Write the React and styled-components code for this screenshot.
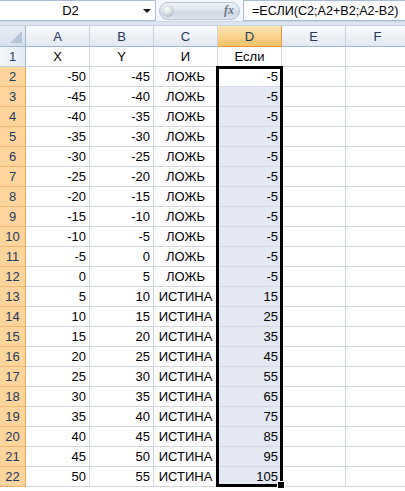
import React from "react";
import styled, { createGlobalStyle } from "styled-components";

const Global = createGlobalStyle`
  html, body { margin: 0; padding: 0; background: #ffffff; }
  body { font-family: "Liberation Sans", Arial, sans-serif; overflow: hidden; }
`;

const Page = styled.div`
  width: 405px;
  height: 491px;
  overflow: hidden;
  background: #ffffff;
`;

const FormulaBar = styled.div`
  display: flex;
  align-items: stretch;
  height: 22px;
  background: #f3f6fa;
  border-bottom: 1px solid #c9d6e6;
  box-sizing: border-box;
`;

const NameBox = styled.div`
  display: flex;
  align-items: center;
  width: 156px;
  background: #ffffff;
  border: 1px solid #a9bdd6;
  border-left: none;
  box-sizing: border-box;
  font-size: 13px;
  color: #000;
`;

const NameText = styled.div`
  flex: 1;
  text-align: center;
  padding-left: 2px;
`;

const DropArrow = styled.div`
  width: 0;
  height: 0;
  margin-right: 4px;
  margin-left: 4px;
  border-left: 4px solid transparent;
  border-right: 4px solid transparent;
  border-top: 4px solid #1a1a1a;
`;

const PillWrap = styled.div`
  display: flex;
  align-items: center;
  padding: 0 3px;
`;

const Pill = styled.div`
  display: flex;
  align-items: center;
  justify-content: space-between;
  width: 81px;
  height: 18px;
  border-radius: 9px;
  background: linear-gradient(#eef2f8 0%, #dfe6f0 45%, #cfd9e6 55%, #dbe3ee 100%);
  border: 1px solid #b3c3d8;
  box-sizing: border-box;
  padding: 0 5px 0 2px;
`;

const Knob = styled.div`
  width: 12px;
  height: 12px;
  border-radius: 50%;
  background: radial-gradient(circle at 40% 35%, #ffffff 0%, #d8dde4 45%, #9aa4b1 100%);
`;

const Fx = styled.span`
  font-family: "Liberation Serif", "Times New Roman", serif;
  font-style: italic;
  font-weight: bold;
  font-size: 12px;
  color: #6a7686;
`;

const FormulaInput = styled.div`
  flex: 1;
  display: flex;
  align-items: center;
  background: #ffffff;
  border: 1px solid #a9bdd6;
  border-right: none;
  box-sizing: border-box;
  padding-left: 8px;
  font-size: 12.6px;
  color: #000;
  white-space: nowrap;
`;

const Band = styled.div`
  height: 3px;
  background: #dbe4ef;
  border-bottom: 1px solid #c5d2e2;
`;

const SheetArea = styled.div`
  position: relative;
`;

const Grid = styled.div`
  display: grid;
  grid-template-columns: 26px repeat(6, 64px);
  grid-template-rows: 21px;
  grid-auto-rows: 20px;
  font-size: 13px;
`;

const Corner = styled.div`
  position: relative;
  background: linear-gradient(#e8eef6, #d6e0ec);
  border-right: 1px solid #9eb6ce;
  border-bottom: 1px solid #9eb6ce;
  box-sizing: border-box;
  &::after {
    content: "";
    position: absolute;
    right: 3px;
    bottom: 3px;
    width: 0;
    height: 0;
    border-left: 12px solid transparent;
    border-bottom: 12px solid #b6c6da;
  }
`;

const ColHead = styled.div`
  display: flex;
  align-items: center;
  justify-content: center;
  box-sizing: border-box;
  border-right: 1px solid ${(p) => (p.$sel ? "#f29536" : "#c5d2e3")};
  border-bottom: 1px solid ${(p) => (p.$sel ? "#f29536" : "#9eb6ce")};
  background: ${(p) =>
    p.$sel
      ? "linear-gradient(#fbe3b5 0%, #f8d38e 50%, #f4c36a 100%)"
      : "linear-gradient(#f9fbfd 0%, #eef2f7 50%, #e2e8f1 100%)"};
  color: #24395a;
`;

const RowHead = styled.div`
  display: flex;
  align-items: center;
  justify-content: center;
  box-sizing: border-box;
  border-right: 1px solid ${(p) => (p.$sel ? "#f2a94f" : "#9eb6ce")};
  border-bottom: 1px solid ${(p) => (p.$sel ? "#f1b672" : "#c5d2e3")};
  background: ${(p) => (p.$sel ? "#fdd59d" : "linear-gradient(90deg, #f4f7fb, #e6ecf4)")};
  color: #24395a;
`;

const Cell = styled.div`
  display: flex;
  align-items: center;
  justify-content: ${(p) => (p.$align === "right" ? "flex-end" : "center")};
  padding: 0 3px;
  box-sizing: border-box;
  border-right: 1px solid #d0d7e5;
  border-bottom: 1px solid #d0d7e5;
  background: ${(p) => (p.$fill ? "#e3e8f3" : "#ffffff")};
  color: #000;
  white-space: nowrap;
  overflow: hidden;
`;

const Selection = styled.div`
  position: absolute;
  border: 3px solid #000;
  box-sizing: border-box;
  pointer-events: none;
`;

const Handle = styled.div`
  position: absolute;
  right: -5px;
  bottom: -5px;
  width: 6px;
  height: 6px;
  background: #000;
  border: 1px solid #fff;
`;

const cols = ["A", "B", "C", "D", "E", "F"];

const rows = [];
for (let i = 0; i < 21; i++) {
  const a = -50 + i * 5;
  const b = a + 5;
  const cond = a > 0;
  rows.push({ n: i + 2, a, b, c: cond ? "ИСТИНА" : "ЛОЖЬ", d: cond ? a + b : a - b });
}

export default function App() {
  return (
    <Page>
      <Global />
      <FormulaBar>
        <NameBox>
          <NameText>D2</NameText>
          <DropArrow />
        </NameBox>
        <PillWrap>
          <Pill>
            <Knob />
            <Fx>fx</Fx>
          </Pill>
        </PillWrap>
        <FormulaInput>=ЕСЛИ(C2;A2+B2;A2-B2)</FormulaInput>
      </FormulaBar>
      <Band />
      <SheetArea>
        <Grid>
          <Corner />
          {cols.map((c) => (
            <ColHead key={c} $sel={c === "D"}>
              {c}
            </ColHead>
          ))}
          <RowHead>1</RowHead>
          <Cell>X</Cell>
          <Cell>Y</Cell>
          <Cell>И</Cell>
          <Cell>Если</Cell>
          <Cell />
          <Cell />
          {rows.map((r) => (
            <React.Fragment key={r.n}>
              <RowHead $sel>{r.n}</RowHead>
              <Cell $align="right">{r.a}</Cell>
              <Cell $align="right">{r.b}</Cell>
              <Cell>{r.c}</Cell>
              <Cell $align="right" $fill={r.n !== 2}>
                {r.d}
              </Cell>
              <Cell />
              <Cell />
            </React.Fragment>
          ))}
        </Grid>
        <Selection style={{ left: 216, top: 40, width: 67, height: 421 }}>
          <Handle />
        </Selection>
      </SheetArea>
    </Page>
  );
}
